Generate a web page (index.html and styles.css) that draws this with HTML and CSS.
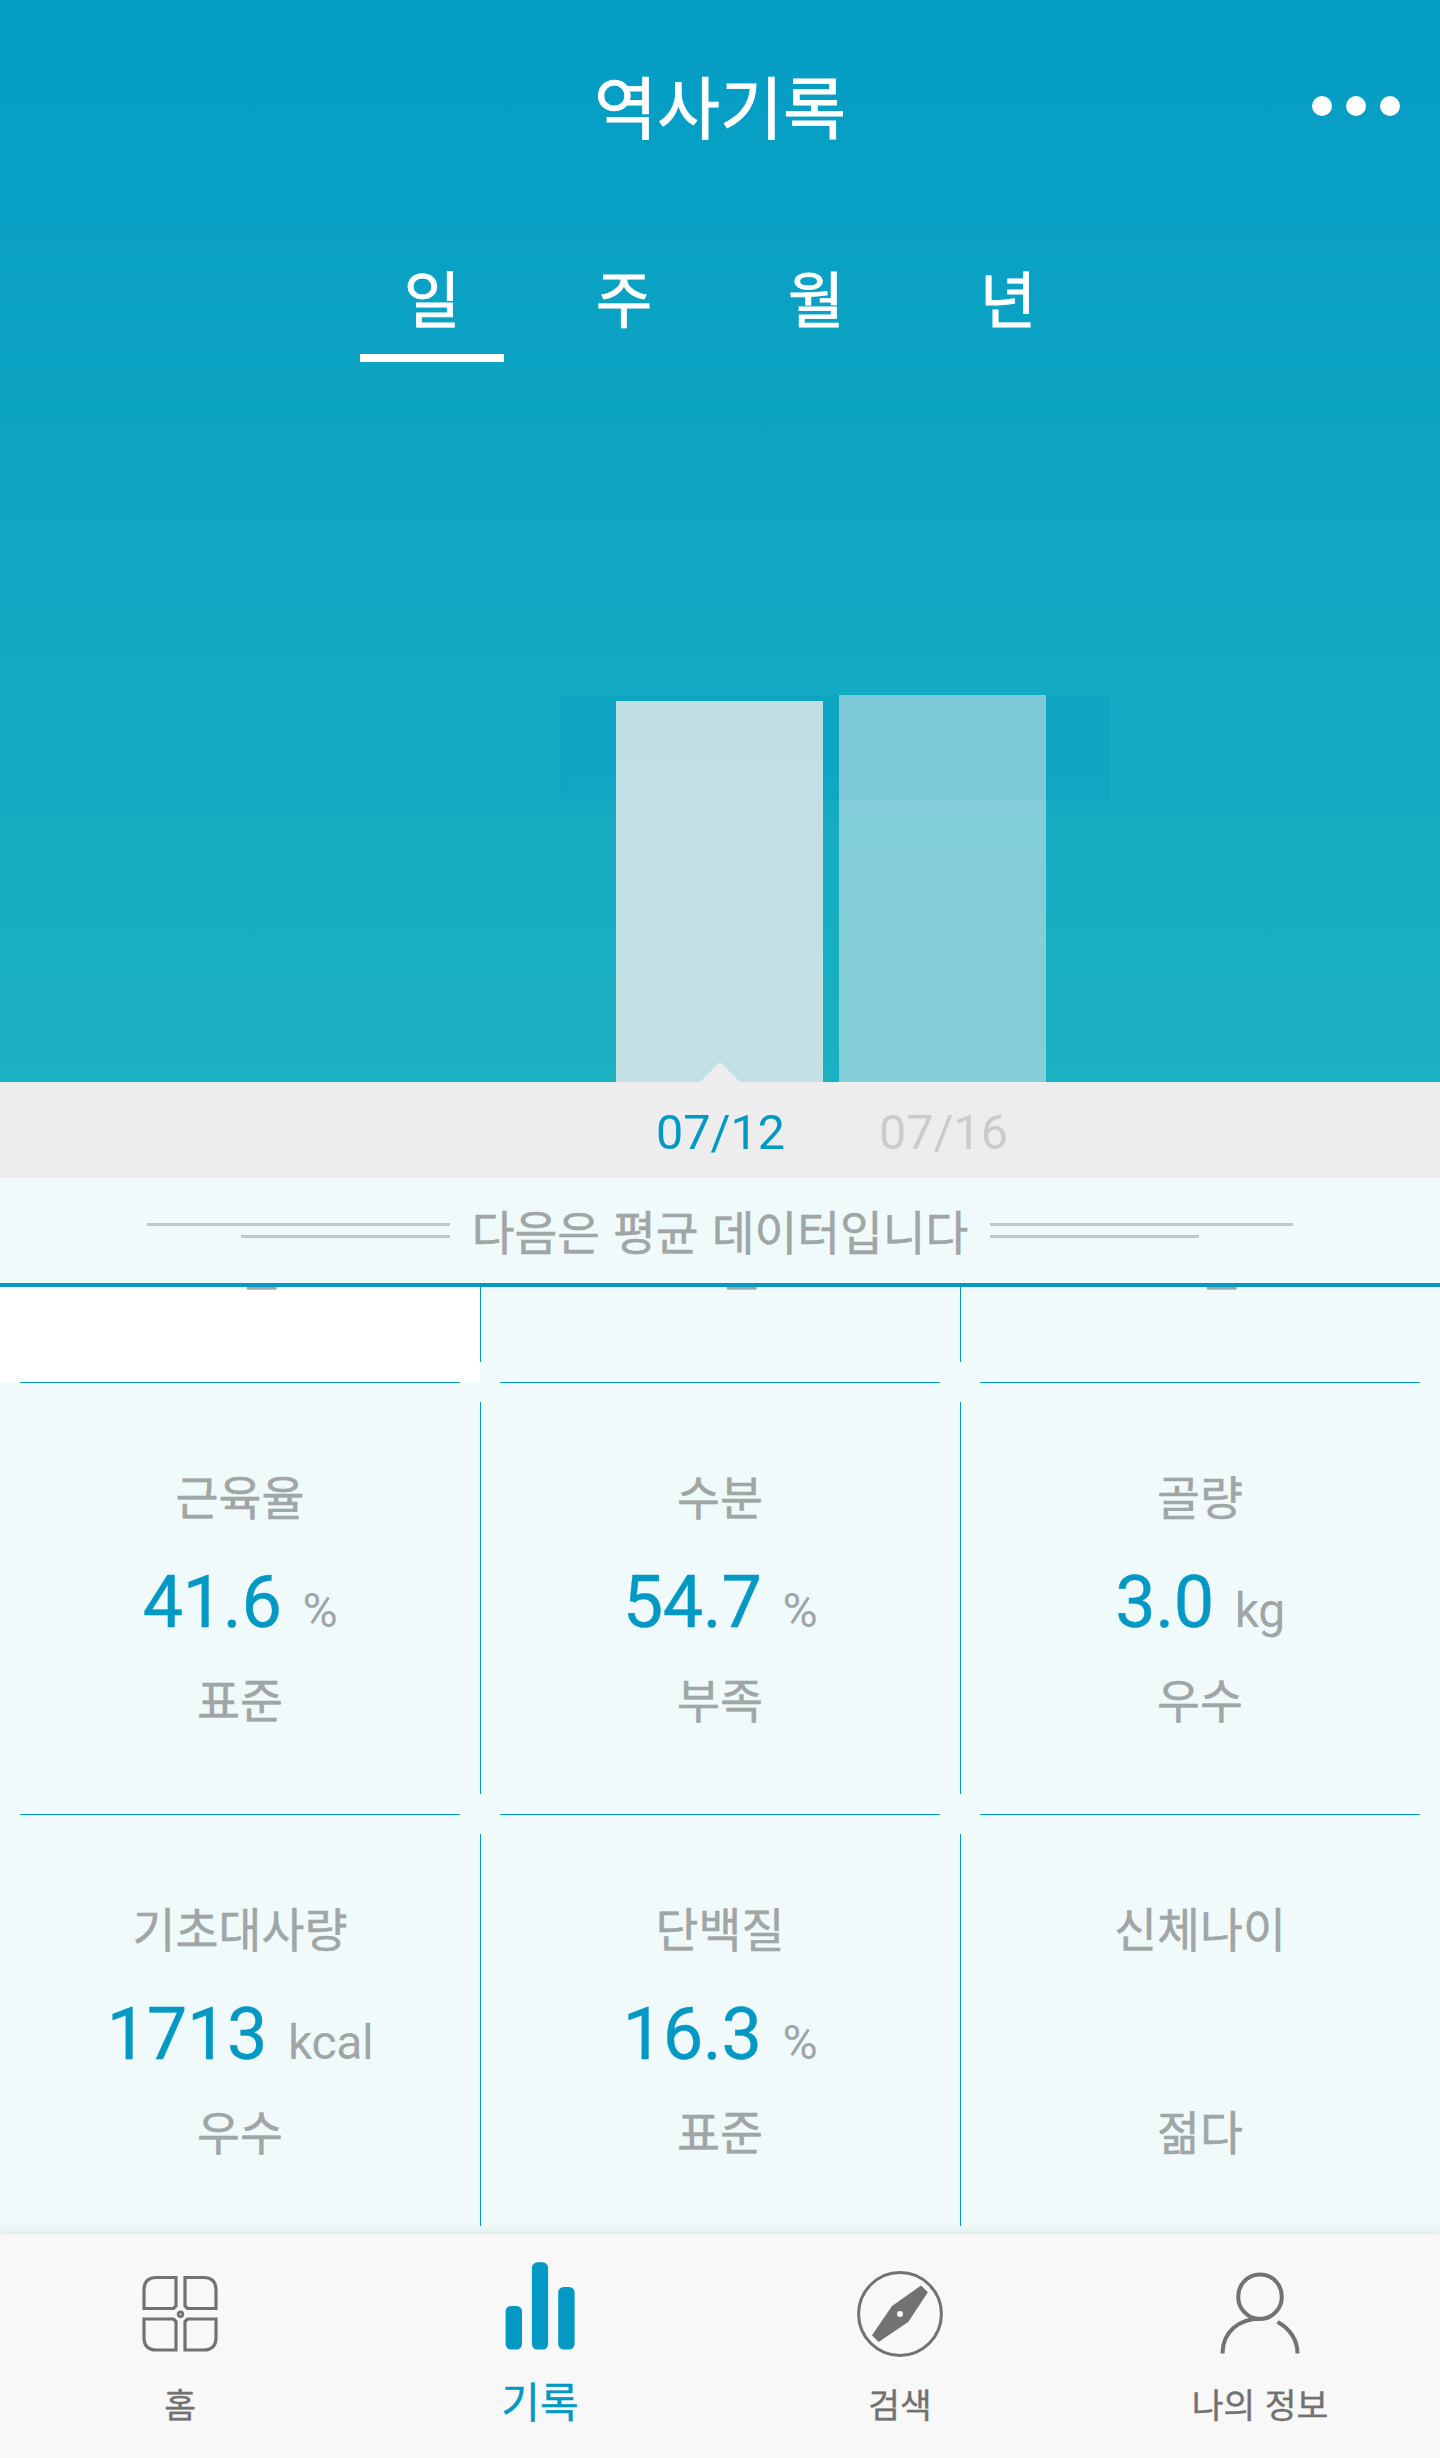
FILE: index.html
```html
<!DOCTYPE html>
<html lang="ko">

<head>
    <meta charset="UTF-8">
    <meta name="viewport" content="width=device-width, initial-scale=1.0">
    <title>역사기록</title>
    <link rel="stylesheet" href="styles.css">
</head>

<body>
    <div class="app">
        <div class="history">
            <header class="header">
                <h1 class="title">역사기록</h1>
                <div class="more"><i></i><i></i><i></i></div>
            </header>
            <nav class="tabs">
                <a class="tab active">일</a>
                <a class="tab">주</a>
                <a class="tab">월</a>
                <a class="tab">년</a>
            </nav>
            <div class="chart">
                <div class="range"></div>
                <div class="bar active" style="height: 381px"></div>
                <div class="bar" style="height: 387px"></div>
            </div>
        </div>
        <div class="dates">
            <span class="date active">07/12</span>
            <span class="date">07/16</span>
        </div>
        <div class="average">
            <div class="lines left"><i></i><i></i></div>
            <h2>다음은 평균 데이터입니다</h2>
            <div class="lines right"><i></i><i></i></div>
        </div>
        <main class="list">
            <div class="grid">
                <!-- scrolled row -->
                <div class="cell selected">
                    <p class="label"></p>
                    <p class="value"></p>
                    <p class="status">표준</p>
                </div>
                <div class="cell">
                    <p class="label"></p>
                    <p class="value"></p>
                    <p class="status">표준</p>
                </div>
                <div class="cell">
                    <p class="label"></p>
                    <p class="value"></p>
                    <p class="status">표준</p>
                </div>
                <div class="cell">
                    <p class="label">근육율</p>
                    <p class="value">41.6<span>%</span></p>
                    <p class="status">표준</p>
                </div>
                <div class="cell">
                    <p class="label">수분</p>
                    <p class="value">54.7<span>%</span></p>
                    <p class="status">부족</p>
                </div>
                <div class="cell">
                    <p class="label">골량</p>
                    <p class="value">3.0<span>kg</span></p>
                    <p class="status">우수</p>
                </div>
                <div class="cell">
                    <p class="label">기초대사량</p>
                    <p class="value">1713<span>kcal</span></p>
                    <p class="status">우수</p>
                </div>
                <div class="cell">
                    <p class="label">단백질</p>
                    <p class="value">16.3<span>%</span></p>
                    <p class="status">표준</p>
                </div>
                <div class="cell">
                    <p class="label">신체나이</p>
                    <p class="value"></p>
                    <p class="status">젊다</p>
                </div>
            </div>
        </main>
        <footer class="menu">
            <a class="menu-item">
                <svg width="100" height="100" viewBox="0 0 100 100" fill="none" stroke="#727272" stroke-width="3.2">
                    <path d="M46 27.5V56L43.5 58.5H14V40Q14 27.5 26.5 27.5Z" />
                    <path d="M55 27.5H73.5Q86 27.5 86 40V58.5H57.5L55 56Z" />
                    <path d="M14 69H43.5L46 71.5V100H26.5Q14 100 14 87.5Z" />
                    <path d="M57.5 69H86V87.5Q86 100 73.5 100H55V71.5Z" />
                    <circle cx="50.5" cy="64.3" r="2.3" stroke-width="2.8" />
                </svg>
                <span>홈</span>
            </a>
            <a class="menu-item active">
                <svg width="100" height="100" viewBox="0 0 100 100" fill="#0399c4">
                    <rect x="15.6" y="56" width="16.4" height="43.5" rx="5.5" />
                    <rect x="41.9" y="12.3" width="16.2" height="87.2" rx="5.5" />
                    <rect x="68.2" y="37" width="16.4" height="62.5" rx="5.5" />
                </svg>
                <span>기록</span>
            </a>
            <a class="menu-item">
                <svg width="100" height="100" viewBox="0 0 100 100" fill="none" stroke="#727272" stroke-width="3">
                    <circle cx="50" cy="64" r="41.4" />
                    <path fill="#727272" stroke="none" fill-rule="evenodd" d="M71 35.5L77.9 42.3L58.2 72L28.6 92L22 85.3L42 56ZM50 61A3 3 0 1 0 50 67A3 3 0 1 0 50 61Z" />
                </svg>
                <span>검색</span>
            </a>
            <a class="menu-item">
                <svg width="100" height="100" viewBox="0 0 100 100" fill="none" stroke="#727272" stroke-width="4">
                    <ellipse cx="50" cy="46.7" rx="21.8" ry="22.3" />
                    <path d="M12.5 103.5C12.5 82 29 68.8 50 68.8" />
                    <path d="M67.5 72C80 78.5 87.5 90 87.5 103.5" />
                </svg>
                <span>나의 정보</span>
            </a>
        </footer>
    </div>
</body>

</html>
```

FILE: styles.css
```css
* {
    margin: 0;
    padding: 0;
    box-sizing: border-box;
}

body {
    width: 100%;
    font-family: "Noto Sans CJK KR", sans-serif;
    background: #f0fafb;
}

.app {
    display: flex;
    flex-direction: column;
    width: 1440px;
    height: 2458px;
    overflow: hidden;
}

/* top */
.history {
    display: flex;
    flex-direction: column;
    height: 1082px;
    background: linear-gradient(180deg, #049cc5 0%, #1bb1c1 100%);
}

.header {
    display: grid;
    grid-template-columns: 1fr auto 1fr;
    align-items: center;
    height: 212px;
}

.title {
    grid-column: 2;
    padding-bottom: 2px;
    font-size: 68.5px;
    font-weight: 400;
    line-height: 98px;
    color: #fff;
    -webkit-text-stroke: 0.8px;
}

.more {
    display: flex;
    justify-content: flex-end;
    gap: 14px;
    padding-right: 40px;
}

.more i {
    width: 20px;
    height: 20px;
    border-radius: 50%;
    background: #fff;
}

.tabs {
    display: flex;
    justify-content: center;
    gap: 48px;
    padding-top: 40px;
}

.tab {
    width: 144px;
    height: 110px;
    border-bottom: 8px solid transparent;
    font-size: 61.5px;
    line-height: 90px;
    text-align: center;
    color: #fff;
    -webkit-text-stroke: 0.8px;
}

.tab.active {
    border-color: #fff;
}

.chart {
    position: relative;
    display: flex;
    flex: 1;
    align-items: flex-end;
    gap: 16px;
    padding-left: 616px;
}

.range {
    position: absolute;
    left: 561px;
    bottom: 282px;
    width: 549px;
    height: 105px;
    background: rgba(4, 156, 197, 0.3);
}

.bar {
    position: relative;
    width: 207px;
    background: rgba(237, 237, 237, 0.5);
}

.bar.active {
    background: rgba(237, 237, 237, 0.8);
}

.bar.active::after {
    content: "";
    position: absolute;
    left: 84px;
    bottom: 0;
    border: 20px solid transparent;
    border-top: 0;
    border-bottom-color: #ededed;
}

.dates {
    display: flex;
    gap: 16px;
    height: 96px;
    padding-left: 617px;
    background: #ededed;
}

.date {
    width: 207px;
    font-family: Roboto, sans-serif;
    font-size: 48.5px;
    line-height: 101px;
    text-align: center;
    color: #cbcbcb;
}

.date.active {
    color: #0399c4;
}

/* average */
.average {
    display: flex;
    justify-content: center;
    align-items: center;
    gap: 22px;
    height: 109px;
    border-bottom: 4px solid #0399c4;
}

.average h2 {
    padding-bottom: 2px;
    font-size: 46.5px;
    font-weight: 400;
    line-height: 68px;
    color: #a0a5a5;
    -webkit-text-stroke: 0.5px;
}

.lines {
    display: flex;
    flex-direction: column;
    gap: 9px;
    width: 303px;
}

.lines.left {
    align-items: flex-end;
}

.lines i {
    width: 100%;
    height: 3px;
    background: #c3c7c6;
}

.lines i:last-child {
    width: 209px;
}

.list {
    height: 947px;
    overflow: hidden;
}

.grid {
    display: grid;
    grid-template-columns: repeat(3, 480px);
    grid-auto-rows: 432px;
    margin-top: -337px;
}

.cell {
    position: relative;
    padding-top: 83px;
    text-align: center;
    color: #a0a5a5;
}

.cell.selected {
    background: #fff;
}

.cell:nth-child(n+4)::before {
    content: "";
    position: absolute;
    top: 0;
    left: 20px;
    right: 20px;
    height: 1px;
    background: #0399c4;
}

.cell:not(:nth-child(3n+1))::after {
    content: "";
    position: absolute;
    top: 20px;
    bottom: 20px;
    left: 0;
    width: 1px;
    background: #0399c4;
}

.label,
.status {
    height: 60px;
    font-size: 46.7px;
    line-height: 60px;
    -webkit-text-stroke: 0.5px;
}

.value {
    height: 80px;
    margin: 38px 0 25px;
    font-family: Roboto, sans-serif;
    font-size: 72px;
    line-height: 80px;
    letter-spacing: -0.4px;
    color: #0399c4;
    -webkit-text-stroke: 0.4px;
}

.value span {
    margin-left: 21px;
    font-size: 48px;
    line-height: 1;
    color: #a0a5a5;
    -webkit-text-stroke: 0;
}

/* bottom menu */
.menu {
    position: relative;
    display: flex;
    height: 224px;
    background: #f8f8f8;
    box-shadow: 0 0 12px rgba(0, 40, 40, 0.14);
}

.menu-item {
    display: flex;
    flex: 1;
    flex-direction: column;
    align-items: center;
    padding-top: 16px;
    font-size: 34.5px;
    color: #727272;
}

.menu-item svg {
    overflow: visible;
}

.menu-item span {
    margin-top: 23px;
    line-height: 60px;
    -webkit-text-stroke: 0.4px;
}

.menu-item.active {
    font-size: 42px;
    color: #0399c4;
}

.menu-item.active span {
    margin-top: 20px;
}
```
